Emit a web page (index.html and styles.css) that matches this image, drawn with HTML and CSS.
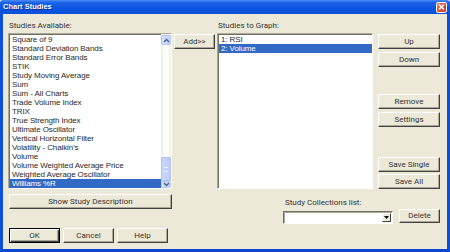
FILE: index.html
```html
<!DOCTYPE html>
<html>
<head>
<meta charset="utf-8">
<link rel="stylesheet" href="styles.css">
</head>
<body>
<div class="window">
  <div class="titlebar">
    <span class="title">Chart Studies</span>
    <span class="close"><svg width="9" height="8" viewBox="0 0 9 8"><path d="M2 1.5 L7 6.5 M7 1.5 L2 6.5" stroke="#fff" stroke-width="1.6" fill="none"/></svg></span>
  </div>
  <div class="frame">
    <div class="content">
      <div class="label lab-avail">Studies Available:</div>
      <div class="label lab-graph">Studies to Graph:</div>

      <div class="list list-avail">
        <div class="items">
          <div class="item">Square of 9</div>
          <div class="item">Standard Deviation Bands</div>
          <div class="item">Standard Error Bands</div>
          <div class="item">STIK</div>
          <div class="item">Study Moving Average</div>
          <div class="item">Sum</div>
          <div class="item">Sum - All Charts</div>
          <div class="item">Trade Volume Index</div>
          <div class="item">TRIX</div>
          <div class="item">True Strength Index</div>
          <div class="item">Ultimate Oscillator</div>
          <div class="item">Vertical Horizontal Filter</div>
          <div class="item">Volatility - Chaikin's</div>
          <div class="item">Volume</div>
          <div class="item">Volume Weighted Average Price</div>
          <div class="item">Weighted Average Oscillator</div>
          <div class="item selected">Williams %R</div>
        </div>
        <div class="scrollbar">
          <div class="sb-btn"><svg width="7" height="5" viewBox="0 0 7 5"><path d="M1 4 L3.5 1.5 L6 4" stroke="#4D6185" stroke-width="1.4" fill="none"/></svg></div>
          <div class="sb-track"></div>
          <div class="sb-thumb"><span class="grip"></span></div>
          <div class="sb-btn sb-down"><svg width="7" height="5" viewBox="0 0 7 5"><path d="M1 1 L3.5 3.5 L6 1" stroke="#4D6185" stroke-width="1.4" fill="none"/></svg></div>
        </div>
      </div>

      <div class="add-col"><div class="btn btn-add">Add&gt;&gt;</div></div>

      <div class="list list-graph">
        <div class="items">
          <div class="item">1: RSI</div>
          <div class="item selected">2: Volume</div>
        </div>
      </div>

      <div class="btn-col">
        <div class="btn">Up</div>
        <div class="btn">Down</div>
        <div class="btn gap-big">Remove</div>
        <div class="btn">Settings</div>
        <div class="btn gap-bigger">Save Single</div>
        <div class="btn gap-small">Save All</div>
      </div>

      <div class="desc-row"><div class="btn btn-desc">Show Study Description</div></div>

      <div class="collections">
        <div class="coll-label">Study Collections list:</div>
        <div class="coll-row">
          <div class="combo"><span class="combo-btn"><svg width="5" height="3" viewBox="0 0 5 3"><path d="M0 0 H5 L2.5 3 Z" fill="#000"/></svg></span></div>
          <div class="btn btn-delete">Delete</div>
        </div>
      </div>

      <div class="ok-row">
        <div class="btn btn-ok">OK</div>
        <div class="btn btn-small">Cancel</div>
        <div class="btn btn-small">Help</div>
      </div>
    </div>
  </div>
</div>
</body>
</html>
```

FILE: styles.css
```css
* { box-sizing: border-box; }
html, body { margin: 0; padding: 0; background: #ECE9D8; }
body { font-family: "Liberation Sans", Arial, sans-serif; font-size: 8px; font-weight: normal; color: #2A2A2A; }

.window { width: 450px; height: 252px; display: flex; flex-direction: column; overflow: hidden; }

.titlebar {
  height: 14px;
  flex: none;
  background: linear-gradient(#4C8DF6 0%, #1D63E8 18%, #0B55E0 55%, #0A50DA 100%);
  display: flex;
  align-items: center;
  justify-content: space-between;
  padding: 0 3px 0 3px;
  border-radius: 3px 3px 0 0;
}
.title { color: #fff; font-weight: bold; font-size: 7.5px; line-height: 10px; text-shadow: 1px 1px 0 #0A2A9A; }
.close {
  width: 11px; height: 11px;
  border: 1px solid #fff;
  border-radius: 2px;
  background: linear-gradient(135deg, #EE8A6B 0%, #E0553A 45%, #C7401F 100%);
  display: flex; align-items: center; justify-content: center;
}

.frame {
  flex: 1;
  border-left: 3px solid #0C4FDD;
  border-right: 3px solid #0C4FDD;
  border-bottom: 3px solid #0A46D0;
  background: #ECE9D8;
}

.content {
  display: grid;
  grid-template-columns: 166px 43px 161px 62px;
  grid-template-rows: 13px 156px 20px 34px;
  padding: 6px 0 0 5px;
}

.label, .btn, .coll-label { font-family: Roboto, "Liberation Sans", sans-serif; color: #333; }

.label { line-height: 10px; padding-top: 1px; white-space: nowrap; }
.lab-avail { grid-column: 1; grid-row: 1; padding-left: 1px; }
.lab-graph { grid-column: 3; grid-row: 1; padding-left: 1px; }

.list {
  background: #fff;
  border: 1px solid;
  border-color: #ACA899 #FFFFFF #FFFFFF #ACA899;
  box-shadow: inset 1px 1px 0 #716F64;
  overflow: hidden;
}
.list-avail { grid-column: 1; grid-row: 2; width: 164px; display: flex; }
.list-graph { grid-column: 3; grid-row: 2; width: 156px; }

.items { flex: 1; padding: 1px 0 0 1px; }
.item { height: 9px; line-height: 9px; padding-left: 2px; white-space: nowrap; letter-spacing: -0.1px; }
.item.selected { background: #316AC5; color: #fff; }

.scrollbar {
  width: 10px;
  flex: none;
  display: flex;
  flex-direction: column;
  background: #F7F6F1;
  padding-top: 1px;
}
.sb-btn {
  height: 10px;
  flex: none;
  background: linear-gradient(90deg, #D3DEFB, #C3D3FB);
  border: 1px solid #B6C9F3;
  border-radius: 1px;
  display: flex; align-items: center; justify-content: center;
}
.sb-down { height: 7px; }
.sb-track { flex: 1; background: linear-gradient(90deg, #EEEDE5, #FCFCFA 30%, #FCFCFA 70%, #EEEDE5); }
.sb-thumb {
  height: 24px;
  flex: none;
  background: linear-gradient(90deg, #C8D6FB, #BCCDF8);
  border: 1px solid #B0C3F0;
  border-radius: 1px;
  display: flex; align-items: center; justify-content: center;
}
.grip { width: 4px; height: 5px; border-top: 1px solid #EEF3FE; border-bottom: 1px solid #EEF3FE; }

.btn {
  height: 15px;
  line-height: 13px;
  text-align: center;
  background: #ECE9D8;
  border: 1px solid;
  border-color: #FFFFFF #404040 #404040 #FFFFFF;
  box-shadow: inset -1px -1px 0 #ACA899;
  white-space: nowrap;
}

.add-col { grid-column: 2; grid-row: 2; }
.btn-add { width: 41px; margin-top: 1px; }

.btn-col { grid-column: 4; grid-row: 2; display: flex; flex-direction: column; padding-top: 1px; }
.btn-col .btn { width: 62px; margin-bottom: 3px; }
.btn-col .gap-big { margin-top: 24px; }
.btn-col .gap-bigger { margin-top: 27px; }
.btn-col .gap-small { margin-top: -1px; }

.desc-row { grid-column: 1; grid-row: 3; padding: 5px 0 0 1px; }
.btn-desc { width: 163px; }

.collections {
  grid-column: 3 / 5;
  grid-row: 3 / 5;
  justify-self: end;
  width: 157px;
  padding-top: 9px;
}
.coll-label { line-height: 10px; padding-left: 2px; }
.coll-row { display: flex; align-items: flex-start; margin-top: 1px; }
.combo {
  width: 110px;
  height: 13px;
  margin-top: 2px;
  background: #fff;
  border: 1px solid;
  border-color: #716F64 #FFFFFF #FFFFFF #716F64;
  box-shadow: inset 1px 1px 0 #ACA899;
  display: flex;
  justify-content: flex-end;
  padding: 1px;
}
.combo-btn {
  width: 9px;
  height: 9px;
  background: #ECE9D8;
  border: 1px solid;
  border-color: #FFFFFF #404040 #404040 #FFFFFF;
  display: flex; align-items: center; justify-content: center;
}
.btn-delete { width: 41px; height: 14px; line-height: 12px; margin-left: 6px; }

.ok-row { grid-column: 1; grid-row: 4; display: flex; gap: 3px; padding: 19px 0 0 1px; }
.btn-ok { width: 51px; border: 1px solid #000; box-shadow: inset 1px 1px 0 #fff, inset -1px -1px 0 #404040, inset -2px -2px 0 #ACA899; }
.btn-small { width: 51px; }
```
